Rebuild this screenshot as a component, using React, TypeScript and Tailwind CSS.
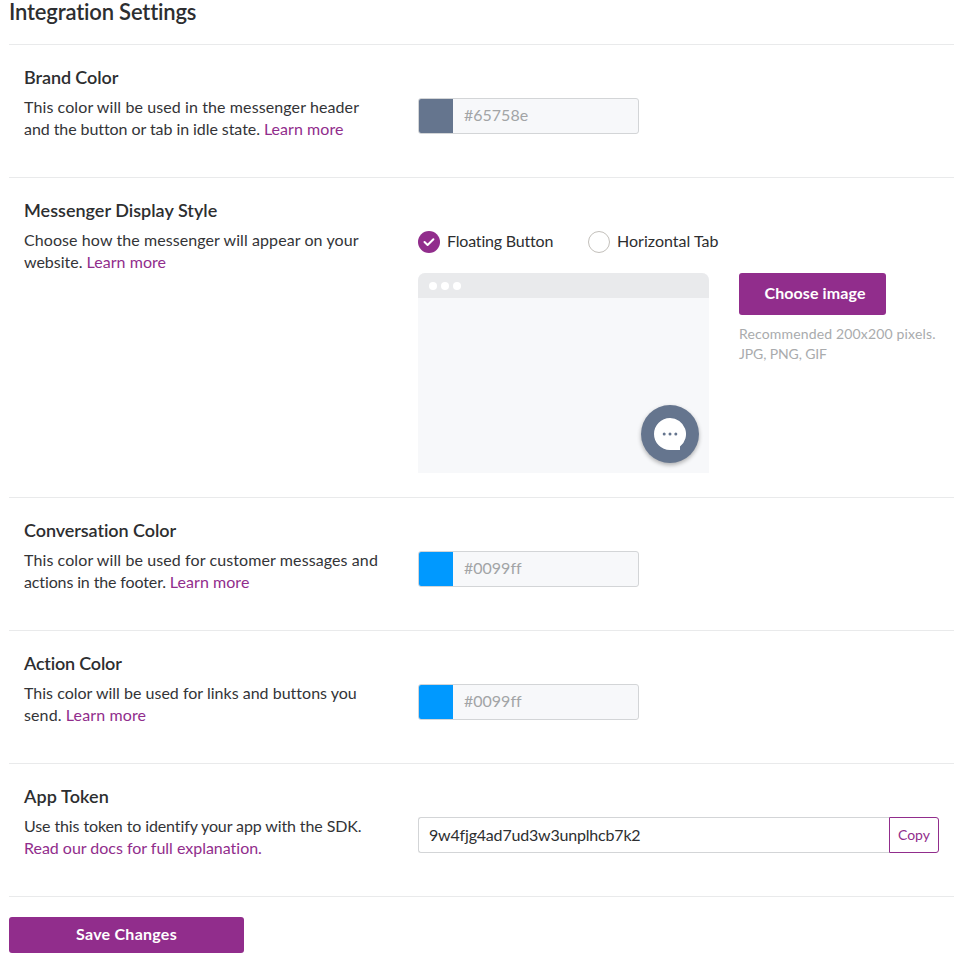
import type { ReactNode } from "react";

function Section({
  title,
  titleClass,
  description,
  className = "h-[133px]",
  children,
}: {
  title: string;
  titleClass: string;
  description: ReactNode;
  className?: string;
  children: ReactNode;
}) {
  return (
    <section className={`flex border-t border-[#e9eaeb] pl-[15px] pr-[15px] ${className}`}>
      <div className="w-[394px] shrink-0 pt-5">
        <h2 className={`text-lg leading-6 font-semibold ${titleClass}`}>{title}</h2>
        <div className="mt-[7px] text-base leading-[22px] whitespace-nowrap text-[#333437]">{description}</div>
      </div>
      <div className="flex-1 pt-[53px]">{children}</div>
    </section>
  );
}

function Link({ children, className = "" }: { children: ReactNode; className?: string }) {
  return (
    <a href="#" className={`text-[#912d8c] ${className}`}>
      {children}
    </a>
  );
}

function ColorField({ value, swatch }: { value: string; swatch: string }) {
  return (
    <div className="flex h-9 w-[221px] overflow-hidden rounded-[3px] border border-[#d3d5d7] bg-[#f7f8fa]">
      <div className={`w-[34px] ${swatch}`} />
      <span className="pl-[11px] text-base leading-[31px] tracking-[0.001px] text-[#a2a4a6]">{value}</span>
    </div>
  );
}

function BrowserPreview() {
  return (
    <div className="flex h-[200px] w-[291px] flex-col overflow-hidden rounded-t-[7px] bg-[#f7f8fa]">
      <div className="flex h-[25px] items-center gap-[4px] bg-[#e9eaec] pl-[10.5px]">
        <i className="size-2 rounded-full bg-white" />
        <i className="size-2 rounded-full bg-white" />
        <i className="size-2 rounded-full bg-white" />
      </div>
      <div className="flex flex-1 items-end justify-end pr-[10px] pb-[10px]">
        <div className="flex size-[58px] items-center justify-center rounded-full bg-[#65758e] shadow-[0_2px_4px_rgba(0,0,0,0.3)]">
          <svg width="32" height="32" viewBox="0 0 32 32">
            <path d="M16 0a16 16 0 1 0 0 32h10v-3.5A16 16 0 0 0 16 0Z" fill="#fff" />
            <circle cx="10.2" cy="16" r="1.5" fill="#65758e" />
            <circle cx="16" cy="16" r="1.5" fill="#65758e" />
            <circle cx="21.8" cy="16" r="1.5" fill="#65758e" />
          </svg>
        </div>
      </div>
    </div>
  );
}

export default function App() {
  return (
    <main className="h-[963px] bg-white pr-[25px] pl-[9px] font-[Lato,sans-serif] text-[#2d2e30]">
      <h1 className="h-11 text-[22px] leading-6 font-semibold tracking-[-0.18px]">Integration Settings</h1>

      <Section
        title="Brand Color"
        titleClass="tracking-[-0.08px]"
        description={
          <>
            <p className="tracking-[0.1px]">This color will be used in the messenger header</p>
            <p className="tracking-[-0.07px]">
              and the button or tab in idle state. <Link className="tracking-[0.05px]">Learn more</Link>
            </p>
          </>
        }
      >
        <ColorField value="#65758e" swatch="bg-[#65758e]" />
      </Section>

      <Section
        title="Messenger Display Style"
        titleClass="tracking-[0.01px]"
        className="h-[320px]"
        description={
          <>
            <p className="tracking-[0.085px]">Choose how the messenger will appear on your</p>
            <p className="tracking-[-0.02px]">
              website. <Link className="tracking-[0.06px]">Learn more</Link>
            </p>
          </>
        }
      >
        <div className="flex h-[22px] items-center text-base">
          <div className="flex w-[170px] items-center gap-[7px]">
            <span className="flex size-[22px] items-center justify-center rounded-full bg-[#912d8c]">
              <svg width="12" height="10" viewBox="0 0 12 10" fill="none">
                <path d="M1.5 5 4.6 8 10.4 2.2" stroke="#fff" strokeWidth="2" strokeLinecap="round" strokeLinejoin="round" />
              </svg>
            </span>
            <span className="pb-[2px] leading-5 tracking-[-0.19px]">Floating Button</span>
          </div>
          <div className="flex items-center gap-[7px]">
            <span className="size-[22px] rounded-full border border-[#c3c0bb]" />
            <span className="pb-[2px] leading-5 tracking-[0.02px]">Horizontal Tab</span>
          </div>
        </div>
        <div className="mt-5 flex gap-[30px]">
          <BrowserPreview />
          <div className="whitespace-nowrap">
            <button className="block h-[42px] w-[147px] rounded-[3px] bg-[#912d8c] pb-[3px] pl-[5px] text-base font-bold tracking-[0.1px] text-white">
              Choose image
            </button>
            <div className="mt-[9px] text-sm leading-5 text-[#a9abad]">
              <p className="tracking-[0.16px]">Recommended 200x200 pixels.</p>
              <p className="tracking-[-0.12px]">JPG, PNG, GIF</p>
            </div>
          </div>
        </div>
      </Section>

      <Section
        title="Conversation Color"
        titleClass="tracking-[-0.07px]"
        description={
          <>
            <p className="tracking-[0.1px]">This color will be used for customer messages and</p>
            <p className="tracking-[-0.13px]">
              actions in the footer. <Link className="tracking-[0.05px]">Learn more</Link>
            </p>
          </>
        }
      >
        <ColorField value="#0099ff" swatch="bg-[#0099ff]" />
      </Section>

      <Section
        title="Action Color"
        titleClass="tracking-[-0.2px]"
        description={
          <>
            <p className="tracking-[0.01px]">This color will be used for links and buttons you</p>
            <p className="tracking-[0.12px]">
              send. <Link>Learn more</Link>
            </p>
          </>
        }
      >
        <ColorField value="#0099ff" swatch="bg-[#0099ff]" />
      </Section>

      <Section
        title="App Token"
        titleClass="tracking-[0.1px]"
        description={
          <>
            <p className="tracking-[-0.11px]">Use this token to identify your app with the SDK.</p>
            <p className="tracking-[-0.02px]">
              <Link>Read our docs for full explanation.</Link>
            </p>
          </>
        }
      >
        <div className="flex h-9">
          <div className="flex-1 rounded-l-[3px] border border-r-0 border-[#d3d5d7] pl-[10px] text-base leading-[33px] tracking-[-0.19px]">
            9w4fjg4ad7ud3w3unplhcb7k2
          </div>
          <button className="w-[50px] rounded-r-[3px] border border-[#912d8c] text-sm text-[#912d8c]">Copy</button>
        </div>
      </Section>

      <div className="border-t border-[#e9eaeb] pt-5">
        <button className="block h-9 w-[235px] rounded-[3px] bg-[#912d8c] pb-[3px] text-base font-bold tracking-[0.25px] text-white">
          Save Changes
        </button>
      </div>
    </main>
  );
}
